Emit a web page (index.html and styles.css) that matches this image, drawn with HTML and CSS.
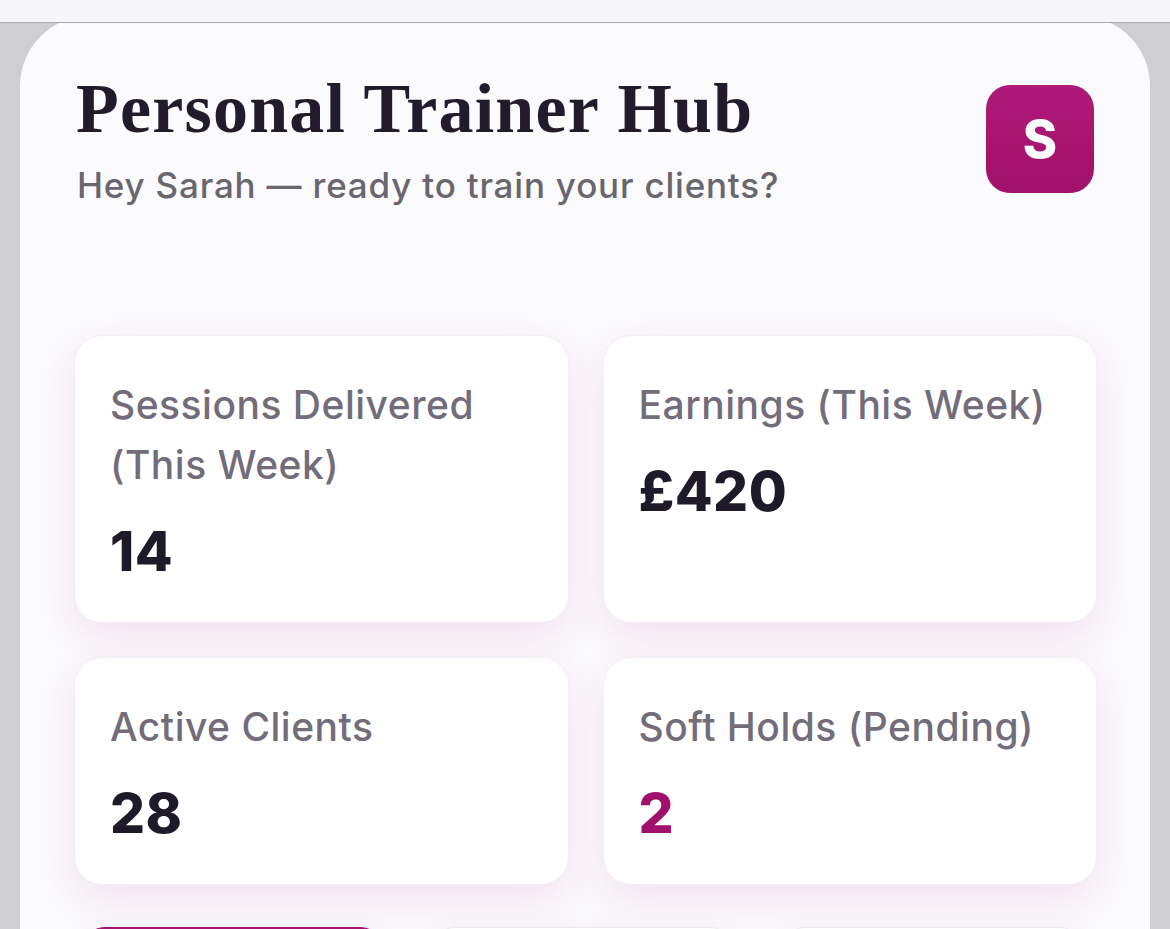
FILE: index.html
```html
<!DOCTYPE html>
<html lang="en">
<head>
<meta charset="utf-8">
<title>Personal Trainer Hub</title>
<link rel="stylesheet" href="styles.css">
</head>
<body>
<div class="topbar"></div>
<main class="panel">
  <header class="header">
    <div class="intro">
      <h1 class="title">Personal Trainer Hub</h1>
      <p class="subtitle">Hey Sarah — ready to train your clients?</p>
    </div>
    <div class="avatar">S</div>
  </header>
  <section class="stats">
    <div class="card">
      <div class="label">Sessions Delivered (This Week)</div>
      <div class="value">14</div>
    </div>
    <div class="card">
      <div class="label">Earnings (This Week)</div>
      <div class="value">£420</div>
    </div>
    <div class="card">
      <div class="label">Active Clients</div>
      <div class="value">28</div>
    </div>
    <div class="card">
      <div class="label">Soft Holds (Pending)</div>
      <div class="value accent">2</div>
    </div>
  </section>
  <nav class="actions">
    <button class="pill primary" aria-label="Schedule"></button>
    <button class="pill" aria-label="Clients"></button>
    <button class="pill" aria-label="Payments"></button>
  </nav>
</main>
</body>
</html>
```
FILE: styles.css
```css
* { box-sizing: border-box; }
html, body { margin: 0; padding: 0; }
body {
  background: #cfced3;
  font-family: Inter, "Noto Sans", sans-serif;
  height: 929px;
  overflow: hidden;
  padding-top: 16px;
}
.topbar {
  position: fixed;
  top: 0; left: 0; right: 0;
  height: 23px;
  background: #f7f7f9;
  border-bottom: 1px solid #a9a9ad;
  z-index: 5;
}
.panel {
  margin: 0 20px;
  background: #fbfafd;
  border-radius: 70px 70px 0 0;
  padding: 55px 53px 40px 54px;
  min-height: 1000px;
}
.header {
  display: flex;
  justify-content: space-between;
  align-items: flex-start;
  padding-right: 3px;
}
.title {
  margin: 0 0 0 2px;
  font-family: "Liberation Serif", serif;
  font-weight: 700;
  font-size: 70px;
  line-height: 76px;
  letter-spacing: 1.2px;
  color: #221b2c;
}
.subtitle {
  margin: 17px 0 0 3px;
  font-size: 35px;
  line-height: 42px;
  font-weight: 500;
  letter-spacing: 0.8px;
  color: #69666d;
}
.avatar {
  margin-top: 14px;
  width: 108px;
  height: 108px;
  border-radius: 24px;
  background: linear-gradient(180deg, #ae1a78, #a1106b);
  color: #fff;
  font-weight: 800;
  font-size: 52px;
  display: flex;
  align-items: center;
  justify-content: center;
}
.stats {
  margin-top: 129px;
  display: grid;
  grid-template-columns: 1fr 1fr;
  column-gap: 34px;
  row-gap: 34px;
}
.card {
  background: #fff;
  border: 1px solid #f3eff4;
  border-radius: 28px;
  padding: 39px 35px 41px;
  box-shadow: 0 14px 40px rgba(170, 40, 130, 0.11);
}
.label {
  font-size: 39px;
  line-height: 60px;
  font-weight: 500;
  letter-spacing: 0.5px;
  color: #736c7a;
}
.value {
  margin-top: 26px;
  font-size: 55px;
  line-height: 60px;
  font-weight: 800;
  letter-spacing: 0.5px;
  color: #1f1a2a;
}
.value.accent { color: #a0106c; }
.actions {
  margin-top: 42px;
  display: flex;
  gap: 47px;
  padding-left: 7px;
}
.pill {
  width: 303px;
  height: 96px;
  border-radius: 24px;
  border: 1px solid #eeeaf0;
  background: #fff;
  box-shadow: 0 10px 30px rgba(170, 40, 130, 0.10);
}
.pill.primary {
  background: #a5136f;
  border-color: #a5136f;
}
```
